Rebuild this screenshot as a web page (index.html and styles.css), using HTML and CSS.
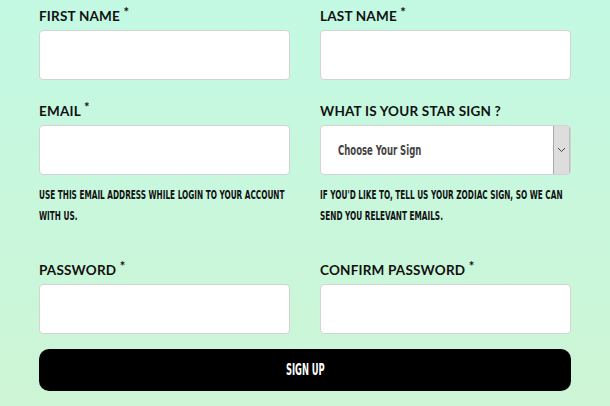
FILE: index.html
```html
<!DOCTYPE html>
<html lang="en">
<head>
<meta charset="utf-8">
<title>Sign up</title>
<link rel="stylesheet" href="styles.css">
</head>
<body>
<form class="form">
  <div class="grid">
    <div class="field">
      <label class="label">FIRST NAME <sup class="req">*</sup></label>
      <input class="input" type="text">
    </div>
    <div class="field">
      <label class="label">LAST NAME <sup class="req">*</sup></label>
      <input class="input" type="text">
    </div>
    <div class="field">
      <label class="label">EMAIL <sup class="req">*</sup></label>
      <input class="input" type="email">
      <p class="help"><span class="cond help-text">USE THIS EMAIL ADDRESS WHILE LOGIN TO YOUR ACCOUNT WITH US.</span></p>
    </div>
    <div class="field">
      <label class="label">WHAT IS YOUR STAR SIGN ?</label>
      <div class="select" role="combobox">
        <span class="select-value"><span class="cond select-text">Choose Your Sign</span></span>
        <span class="select-arrow">
          <svg width="9" height="6" viewBox="0 0 9 6"><path d="M1 1 L4.5 4.5 L8 1" fill="none" stroke="#444" stroke-width="1"/></svg>
        </span>
      </div>
      <p class="help"><span class="cond help-text">IF YOU'D LIKE TO, TELL US YOUR ZODIAC SIGN, SO WE CAN SEND YOU RELEVANT EMAILS.</span></p>
    </div>
    <div class="field field-pw">
      <label class="label">PASSWORD <sup class="req">*</sup></label>
      <input class="input" type="password">
    </div>
    <div class="field field-pw">
      <label class="label">CONFIRM PASSWORD <sup class="req">*</sup></label>
      <input class="input" type="password">
    </div>
  </div>
  <button class="btn" type="button"><span class="cond btn-text">SIGN UP</span></button>
</form>
</body>
</html>
```
FILE: styles.css
```css
html, body {
  margin: 0;
  padding: 0;
}
body {
  width: 610px;
  height: 406px;
  overflow: hidden;
  background: linear-gradient(180deg, #c3f9e3 0%, #cdf5d5 100%);
  font-family: "Lato", "DejaVu Sans", sans-serif;
  color: #111;
}
.form {
  padding: 7px 39px 0 39px;
}
.grid {
  display: grid;
  grid-template-columns: 251px 251px;
  column-gap: 30px;
  row-gap: 22px;
}
.field {
  display: flex;
  flex-direction: column;
  min-width: 0;
}
.field-pw {
  margin-top: 13px;
}
.label {
  font-size: 13.5px;
  font-weight: 700;
  line-height: 18px;
  letter-spacing: 0.2px;
  margin-bottom: 5px;
  white-space: nowrap;
}
.req {
  font-size: 13px;
  line-height: 0;
  vertical-align: 4px;
  font-weight: 700;
}
.input {
  box-sizing: border-box;
  height: 50px;
  width: 251px;
  margin: 0;
  border: 1px solid #d3d3d3;
  border-radius: 4px;
  background: #fff;
  outline: none;
  padding: 0 12px;
}
.select {
  box-sizing: border-box;
  height: 50px;
  width: 251px;
  display: flex;
  border: 1px solid #d3d3d3;
  border-radius: 4px;
  background: #fff;
  overflow: hidden;
}
.select-value {
  flex: 1;
  display: flex;
  align-items: center;
  padding-left: 17px;
  overflow: hidden;
}
.select-arrow {
  width: 15px;
  display: flex;
  align-items: center;
  justify-content: center;
  background: #dddddd;
  border-left: 1px solid #a9a9a9;
  border-right: 1px solid #bdbdbd;
}
.cond {
  display: inline-block;
  font-family: "DejaVu Sans Condensed", "DejaVu Sans", sans-serif;
  font-weight: 700;
  transform-origin: 0 50%;
  white-space: nowrap;
}
.help {
  margin: 9px 0 0 0;
  height: 42px;
  width: 251px;
  overflow: hidden;
}
.help-text {
  white-space: normal;
  font-size: 13px;
  line-height: 21px;
  width: 401px;
  transform: scaleX(0.626);
  transform-origin: 0 0;
  color: #111;
}
.select-text {
  font-size: 13.5px;
  color: #444;
  transform: scaleX(0.7);
}
.btn {
  display: flex;
  align-items: center;
  justify-content: center;
  box-sizing: border-box;
  width: 532px;
  height: 42px;
  margin-top: 15px;
  border: 0;
  border-radius: 10px;
  background: #000;
  color: #fff;
  padding: 0;
}
.btn-text {
  font-size: 15px;
  transform: scaleX(0.62);
  transform-origin: 50% 50%;
}
```
